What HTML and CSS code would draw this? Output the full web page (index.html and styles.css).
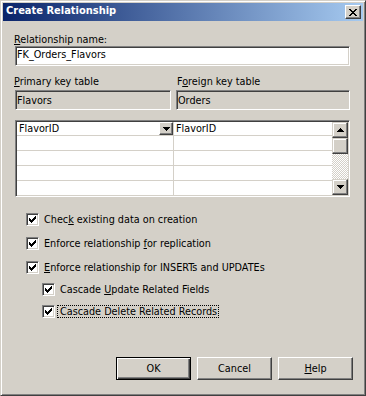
FILE: index.html
```html
<!DOCTYPE html>
<html>
<head>
<meta charset="utf-8">
<link rel="stylesheet" href="styles.css">
</head>
<body>
<div class="window">
  <div class="titlebar">
    <span class="title">Create Relationship</span>
    <span class="close"><svg width="8" height="7" viewBox="0 0 8 7"><path d="M0 0h2v1H0zM6 0h2v1H6zM1 1h2v1H1zM5 1h2v1H5zM2 2h4v1H2zM3 3h2v1H3zM2 4h4v1H2zM1 5h2v1H1zM5 5h2v1H5zM0 6h2v1H0zM6 6h2v1H6z" fill="#000"/></svg></span>
  </div>
  <div class="content">
    <div class="lbl lbl-name"><u>R</u>elationship name:</div>
    <div class="edit">FK_Orders_Flavors</div>
    <div class="tables">
      <div class="tcol">
        <div class="lbl lbl-left"><u>P</u>rimary key table</div>
        <div class="edit ro">Flavors</div>
      </div>
      <div class="tcol">
        <div class="lbl lbl-right">F<u>o</u>reign key table</div>
        <div class="edit ro">Orders</div>
      </div>
    </div>
    <div class="grid">
      <div class="cells">
        <div class="row first">
          <div class="c1"><span class="ctext">FlavorID</span><span class="dd"><svg width="7" height="4" viewBox="0 0 7 4"><path d="M0 0h7v1H0zM1 1h5v1H1zM2 2h3v1H2zM3 3h1v1H3z" fill="#000"/></svg></span></div>
          <div class="c2">FlavorID</div>
        </div>
        <div class="row"><div class="c1"></div><div class="c2"></div></div>
        <div class="row"><div class="c1"></div><div class="c2"></div></div>
        <div class="row"><div class="c1"></div><div class="c2"></div></div>
        <div class="row"><div class="c1"></div><div class="c2"></div></div>
      </div>
      <div class="sb">
        <div class="sbbtn"><svg width="7" height="4" viewBox="0 0 7 4"><path d="M3 0h1v1H3zM2 1h3v1H2zM1 2h5v1H1zM0 3h7v1H0z" fill="#000"/></svg></div>
        <div class="thumb"></div>
        <div class="track"></div>
        <div class="sbbtn"><svg width="7" height="4" viewBox="0 0 7 4"><path d="M0 0h7v1H0zM1 1h5v1H1zM2 2h3v1H2zM3 3h1v1H3z" fill="#000"/></svg></div>
      </div>
    </div>
    <div class="checks">
      <div class="chk"><span class="cb"><svg width="7" height="7" viewBox="0 0 7 7"><path d="M0 2h1v3H0zM1 3h1v3H1zM2 4h1v3H2zM3 3h1v3H3zM4 2h1v3H4zM5 1h1v3H5zM6 0h1v3H6z" fill="#000"/></svg></span><span class="cl">Chec<u>k</u> existing data on creation</span></div>
      <div class="chk gap11"><span class="cb"><svg width="7" height="7" viewBox="0 0 7 7"><path d="M0 2h1v3H0zM1 3h1v3H1zM2 4h1v3H2zM3 3h1v3H3zM4 2h1v3H4zM5 1h1v3H5zM6 0h1v3H6z" fill="#000"/></svg></span><span class="cl">Enforce relationship <u>f</u>or replication</span></div>
      <div class="chk gap11"><span class="cb"><svg width="7" height="7" viewBox="0 0 7 7"><path d="M0 2h1v3H0zM1 3h1v3H1zM2 4h1v3H2zM3 3h1v3H3zM4 2h1v3H4zM5 1h1v3H5zM6 0h1v3H6z" fill="#000"/></svg></span><span class="cl"><u>E</u>nforce relationship for INSERTs and UPDATEs</span></div>
      <div class="chk gap9 sub"><span class="cb"><svg width="7" height="7" viewBox="0 0 7 7"><path d="M0 2h1v3H0zM1 3h1v3H1zM2 4h1v3H2zM3 3h1v3H3zM4 2h1v3H4zM5 1h1v3H5zM6 0h1v3H6z" fill="#000"/></svg></span><span class="cl">Cascade <u>U</u>pdate Related Fields</span></div>
      <div class="chk gap9 sub"><span class="cb"><svg width="7" height="7" viewBox="0 0 7 7"><path d="M0 2h1v3H0zM1 3h1v3H1zM2 4h1v3H2zM3 3h1v3H3zM4 2h1v3H4zM5 1h1v3H5zM6 0h1v3H6z" fill="#000"/></svg></span><span class="cl focus">Cascade Delete Related Records</span></div>
    </div>
    <div class="buttons">
      <div class="btn default">OK</div>
      <div class="btn">Cancel</div>
      <div class="btn"><u>H</u>elp</div>
    </div>
  </div>
</div>
</body>
</html>
```

FILE: styles.css
```css
* { box-sizing: border-box; }
html, body { margin: 0; padding: 0; }
body {
  width: 366px;
  height: 396px;
  background: #D4D0C8;
  font-family: "DejaVu Sans Condensed", "DejaVu Sans", "Liberation Sans", sans-serif;
  font-stretch: condensed;
  font-size: 10.75px;
  color: #000;
}
u { text-decoration: underline; text-underline-offset: 1px; }

.window {
  width: 366px;
  height: 396px;
  border: 1px solid;
  border-color: #D4D0C8 #404040 #404040 #D4D0C8;
  box-shadow: inset 1px 1px #fff, inset -1px -1px #808080;
  padding: 2px;
  display: flex;
  flex-direction: column;
  background: #D4D0C8;
}

.titlebar {
  height: 18px;
  flex: none;
  display: flex;
  justify-content: space-between;
  align-items: flex-start;
  padding: 1px 2px 0 3px;
  background: linear-gradient(to right, #0A246A, #A6CAF0);
}
.title {
  color: #fff;
  font-weight: bold;
  font-size: 11px;
  line-height: 14px;
}
.close {
  width: 16px;
  height: 14px;
  margin-top: 1px;
  display: flex;
  align-items: center;
  justify-content: center;
  background: #D4D0C8;
  border: 1px solid;
  border-color: #fff #404040 #404040 #fff;
  box-shadow: inset -1px -1px #808080, inset 1px 1px #D4D0C8;
}
.close svg, .sbbtn svg, .dd svg, .cb svg { display: block; }

.content {
  flex: 1;
  display: flex;
  flex-direction: column;
  padding: 0 13px 13px 12px;
}

.lbl { line-height: 13px; white-space: nowrap; }
.lbl-name { margin-top: 12px; margin-left: -1px; }
.lbl-left { margin-left: -1px; }
.lbl-right { margin-left: 1px; }

.edit {
  height: 20px;
  border: 1px solid;
  border-color: #808080 #fff #fff #808080;
  box-shadow: inset 1px 1px #404040, inset -1px -1px #D4D0C8;
  background: #fff;
  padding: 1px 1px 0;
  line-height: 14px;
  overflow: hidden;
  white-space: nowrap;
}
.edit.ro {
  background: #D4D0C8;
  padding-top: 3px;
  margin-top: 2px;
}

.tables {
  display: grid;
  grid-template-columns: 156px 1fr;
  column-gap: 5px;
  margin-top: 9px;
}

.grid {
  margin-top: 10px;
  height: 77px;
  border: 1px solid;
  border-color: #808080 #fff #fff #808080;
  box-shadow: inset 1px 1px #404040, inset -1px -1px #D4D0C8;
  padding: 1px;
  display: flex;
  background: #fff;
}
.cells {
  flex: 1;
  overflow: hidden;
  background: #fff;
}
.row {
  display: flex;
  height: 15px;
  border-bottom: 1px solid #D4D0C8;
}
.row.first { height: 14px; }
.c1 {
  width: 157px;
  flex: none;
  border-right: 1px solid #D4D0C8;
  display: flex;
  justify-content: space-between;
  padding-left: 2px;
  line-height: 13px;
}
.c2 {
  flex: 1;
  padding-left: 2px;
  line-height: 13px;
}
.dd {
  width: 14px;
  height: 13px;
  display: flex;
  align-items: center;
  justify-content: center;
  background: #D4D0C8;
  border: 1px solid;
  border-color: #fff #404040 #404040 #fff;
  box-shadow: inset -1px -1px #808080, inset 1px 1px #D4D0C8;
}

.sb {
  width: 16px;
  flex: none;
  display: flex;
  flex-direction: column;
}
.sbbtn, .thumb {
  width: 16px;
  height: 16px;
  flex: none;
  display: flex;
  align-items: center;
  justify-content: center;
  background: #D4D0C8;
  border: 1px solid;
  border-color: #D4D0C8 #404040 #404040 #D4D0C8;
  box-shadow: inset -1px -1px #808080, inset 1px 1px #fff;
}
.track {
  flex: 1;
  background: repeating-conic-gradient(#D4D0C8 0 25%, #fff 0 50%) 0 0 / 2px 2px;
}

.checks {
  margin-top: 16px;
  display: flex;
  flex-direction: column;
}
.chk {
  display: flex;
  align-items: center;
  height: 13px;
  margin-left: 11px;
}
.chk.gap11 { margin-top: 11px; }
.chk.gap9 { margin-top: 9px; }
.chk.sub { margin-left: 27px; }
.cb {
  width: 13px;
  height: 13px;
  flex: none;
  display: flex;
  align-items: center;
  justify-content: center;
  background: #fff;
  border: 1px solid;
  border-color: #808080 #fff #fff #808080;
  box-shadow: inset 1px 1px #404040, inset -1px -1px #D4D0C8;
}
.cl {
  margin-left: 2px;
  border: 1px solid transparent;
  padding: 0 1px 0 2px;
  line-height: 11px;
  white-space: nowrap;
}
.cl.focus { border: 1px dotted #000; }

.buttons {
  margin-top: auto;
  margin-right: -3px;
  display: flex;
  justify-content: flex-end;
  gap: 6px;
}
.btn {
  width: 75px;
  height: 23px;
  display: flex;
  align-items: center;
  justify-content: center;
  background: #D4D0C8;
  border: 1px solid;
  border-color: #fff #404040 #404040 #fff;
  box-shadow: inset -1px -1px #808080, inset 1px 1px #D4D0C8;
}
.btn.default {
  border: 1px solid #000;
  box-shadow: inset 1px 1px #fff, inset -1px -1px #404040, inset -2px -2px #808080;
}
```
